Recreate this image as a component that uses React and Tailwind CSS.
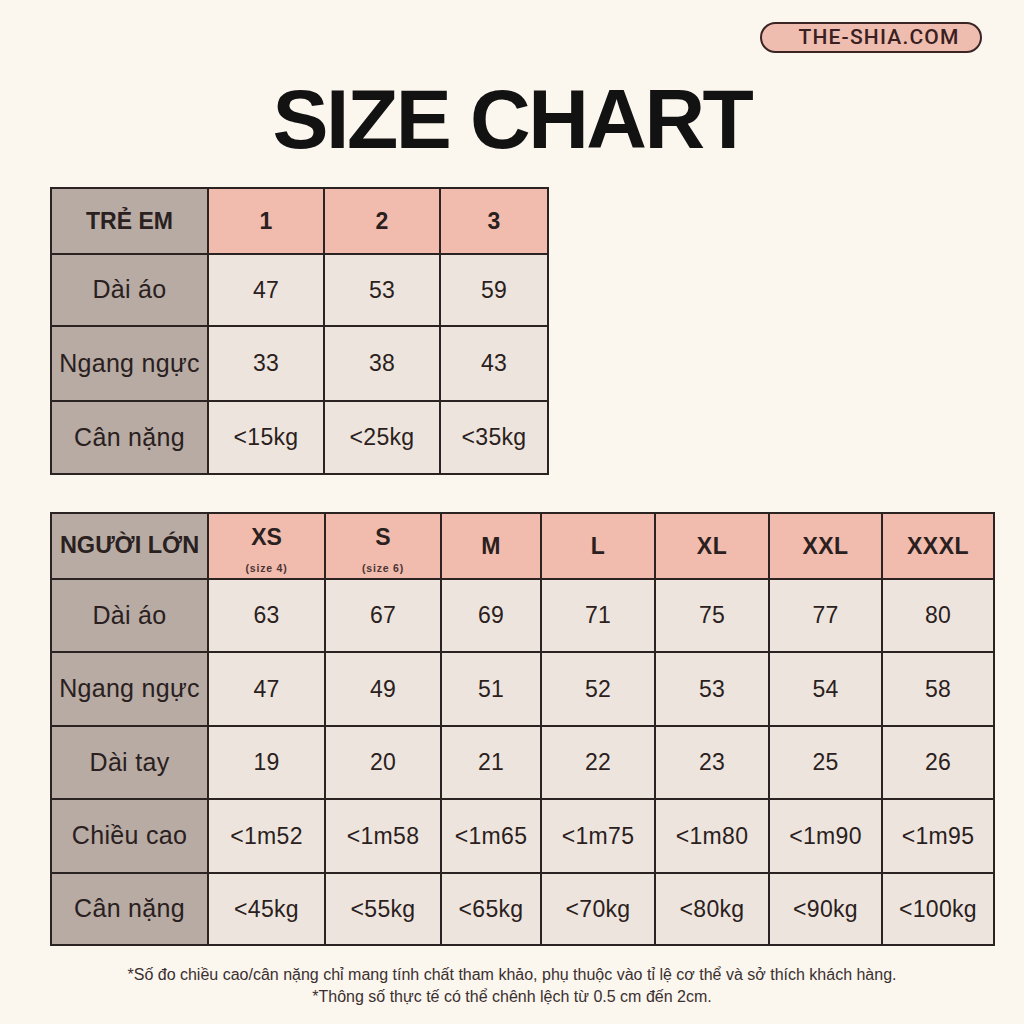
import React from "react";

const kids = {
  header: ["TRẺ EM", "1", "2", "3"],
  body: [
    ["Dài áo", "47", "53", "59"],
    ["Ngang ngực", "33", "38", "43"],
    ["Cân nặng", "<15kg", "<25kg", "<35kg"],
  ],
};

const adults = {
  header: [
    ["NGƯỜI LỚN"],
    ["XS", "(size 4)"],
    ["S", "(size 6)"],
    ["M"],
    ["L"],
    ["XL"],
    ["XXL"],
    ["XXXL"],
  ],
  body: [
    ["Dài áo", "63", "67", "69", "71", "75", "77", "80"],
    ["Ngang ngực", "47", "49", "51", "52", "53", "54", "58"],
    ["Dài tay", "19", "20", "21", "22", "23", "25", "26"],
    ["Chiều cao", "<1m52", "<1m58", "<1m65", "<1m75", "<1m80", "<1m90", "<1m95"],
    ["Cân nặng", "<45kg", "<55kg", "<65kg", "<70kg", "<80kg", "<90kg", "<100kg"],
  ],
};

const F = { fontFamily: '"Liberation Sans", Arial, sans-serif' };

function Cell({ kind, top, children }) {
  const bg =
    kind === "corner" || kind === "label"
      ? "bg-[#b7aba4]"
      : kind === "head"
      ? "bg-[#f1bcae]"
      : "bg-[#ede5dd]";
  return (
    <div
      className={`${bg} flex flex-col items-center ${
        top ? "justify-start pt-[12px]" : "justify-center"
      } overflow-visible whitespace-nowrap text-[#2a2020]`}
    >
      {children}
    </div>
  );
}

export default function App() {
  return (
    <div
      className="w-[1024px] h-[1024px] bg-[#fbf6ee] flex flex-col items-start"
      style={F}
    >
      <div className="w-full flex justify-end pr-[42px] pt-[22px]">
        <div
          className="h-[31px] w-[222px] pl-[16px] rounded-full border-2 border-[#3a2424] bg-[#eebdb0] flex items-center justify-center text-[21px] font-medium text-[#3a2020] tracking-[1.2px]"
          style={{ fontFamily: 'Roboto, "Liberation Sans", sans-serif' }}
        >
          THE-SHIA.COM
        </div>
      </div>

      <h1 className="w-full text-center mt-[24px] text-[84px] leading-none font-bold tracking-[-0.03em] text-[#121212]">
        SIZE CHART
      </h1>

      {/* Kids table */}
      <div
        className="ml-[50px] mt-[26px] grid gap-[2px] p-[2px] bg-[#2b2222]"
        style={{
          gridTemplateColumns: "155px 114px 114px 106px",
          gridTemplateRows: "64px 70px 73px 71px",
        }}
      >
        {kids.header.map((h, i) => (
          <Cell key={"h" + i} kind={i === 0 ? "corner" : "head"}>
            <span className="text-[23px] font-bold">{h}</span>
          </Cell>
        ))}
        {kids.body.map((row, r) =>
          row.map((v, i) => (
            <Cell key={r + "-" + i} kind={i === 0 ? "label" : "data"}>
              <span
                className={
                  i === 0
                    ? "text-[25px] tracking-[0.3px]"
                    : "text-[23px] tracking-[0.3px]"
                }
              >
                {v}
              </span>
            </Cell>
          ))
        )}
      </div>

      {/* Adults table */}
      <div
        className="ml-[50px] mt-[37px] grid gap-[2px] p-[2px] bg-[#2b2222]"
        style={{
          gridTemplateColumns: "155px 115px 114px 98px 112px 112px 111px 110px",
          gridTemplateRows: "64px 71px 72px 71px 72px 70px",
        }}
      >
        {adults.header.map((h, i) => (
          <Cell
            key={"ah" + i}
            kind={i === 0 ? "corner" : "head"}
            top={h.length > 1}
          >
            {h.length > 1 ? (
              <>
                <span className="text-[23px] font-bold leading-none">{h[0]}</span>
                <span className="text-[10.5px] font-bold leading-none mt-[14px] tracking-[0.8px] text-[#4a3434]">
                  {h[1]}
                </span>
              </>
            ) : (
              <span
                className={
                  i === 0
                    ? "text-[23.5px] font-bold"
                    : "text-[23px] font-bold tracking-[0.5px]"
                }
              >
                {h[0]}
              </span>
            )}
          </Cell>
        ))}
        {adults.body.map((row, r) =>
          row.map((v, i) => (
            <Cell key={"a" + r + "-" + i} kind={i === 0 ? "label" : "data"}>
              <span
                className={
                  i === 0
                    ? "text-[25px] tracking-[0.3px]"
                    : "text-[23px] tracking-[0.3px]"
                }
              >
                {v}
              </span>
            </Cell>
          ))
        )}
      </div>

      <div
        className="w-full mt-[18px] text-center text-[16px] leading-[22px] text-[#3a3030]"
        style={{ fontFamily: '"Liberation Sans", Arial, sans-serif' }}
      >
        <p>
          *Số đo chiều cao/cân nặng chỉ mang tính chất tham khảo, phụ thuộc vào tỉ lệ cơ thể và sở thích khách hàng.
        </p>
        <p>*Thông số thực tế có thể chênh lệch từ 0.5 cm đến 2cm.</p>
      </div>
    </div>
  );
}
